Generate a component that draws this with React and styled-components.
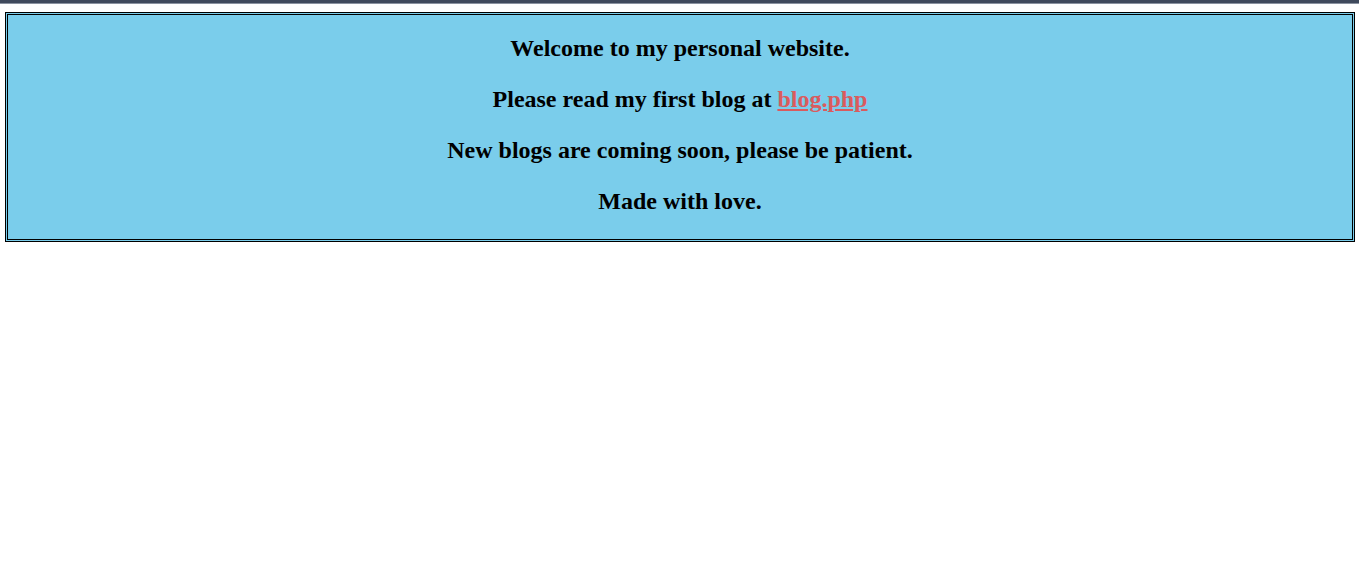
import React from 'react';
import styled, { createGlobalStyle } from 'styled-components';

const GlobalStyle = createGlobalStyle`
  body {
    margin: 0;
    background: #fff;
    font-family: "Liberation Serif", "Times New Roman", serif;
  }
`;

const TopBar = styled.div`
  height: 3px;
  background: #3f495c;
  border-bottom: 1px solid #8a92a0;
`;

const Page = styled.div`
  padding: 8px 4px 0 5px;
`;

const Panel = styled.section`
  background: #7acdeb;
  border: 3px double #000;
  padding: 19px 10px 24px;
  display: flex;
  flex-direction: column;
  align-items: center;
  gap: 23px;
`;

const Line = styled.p`
  margin: 0;
  font-size: 24px;
  line-height: 28px;
  font-weight: bold;
  color: #000;
  text-align: center;
`;

const BlogLink = styled.a`
  color: #d95b5e;
  text-decoration: underline;
`;

export default function App() {
  return (
    <>
      <GlobalStyle />
      <TopBar />
      <Page>
        <Panel>
          <Line>Welcome to my personal website.</Line>
          <Line>
            Please read my first blog at <BlogLink href="blog.php">blog.php</BlogLink>
          </Line>
          <Line>New blogs are coming soon, please be patient.</Line>
          <Line>Made with love.</Line>
        </Panel>
      </Page>
    </>
  );
}
